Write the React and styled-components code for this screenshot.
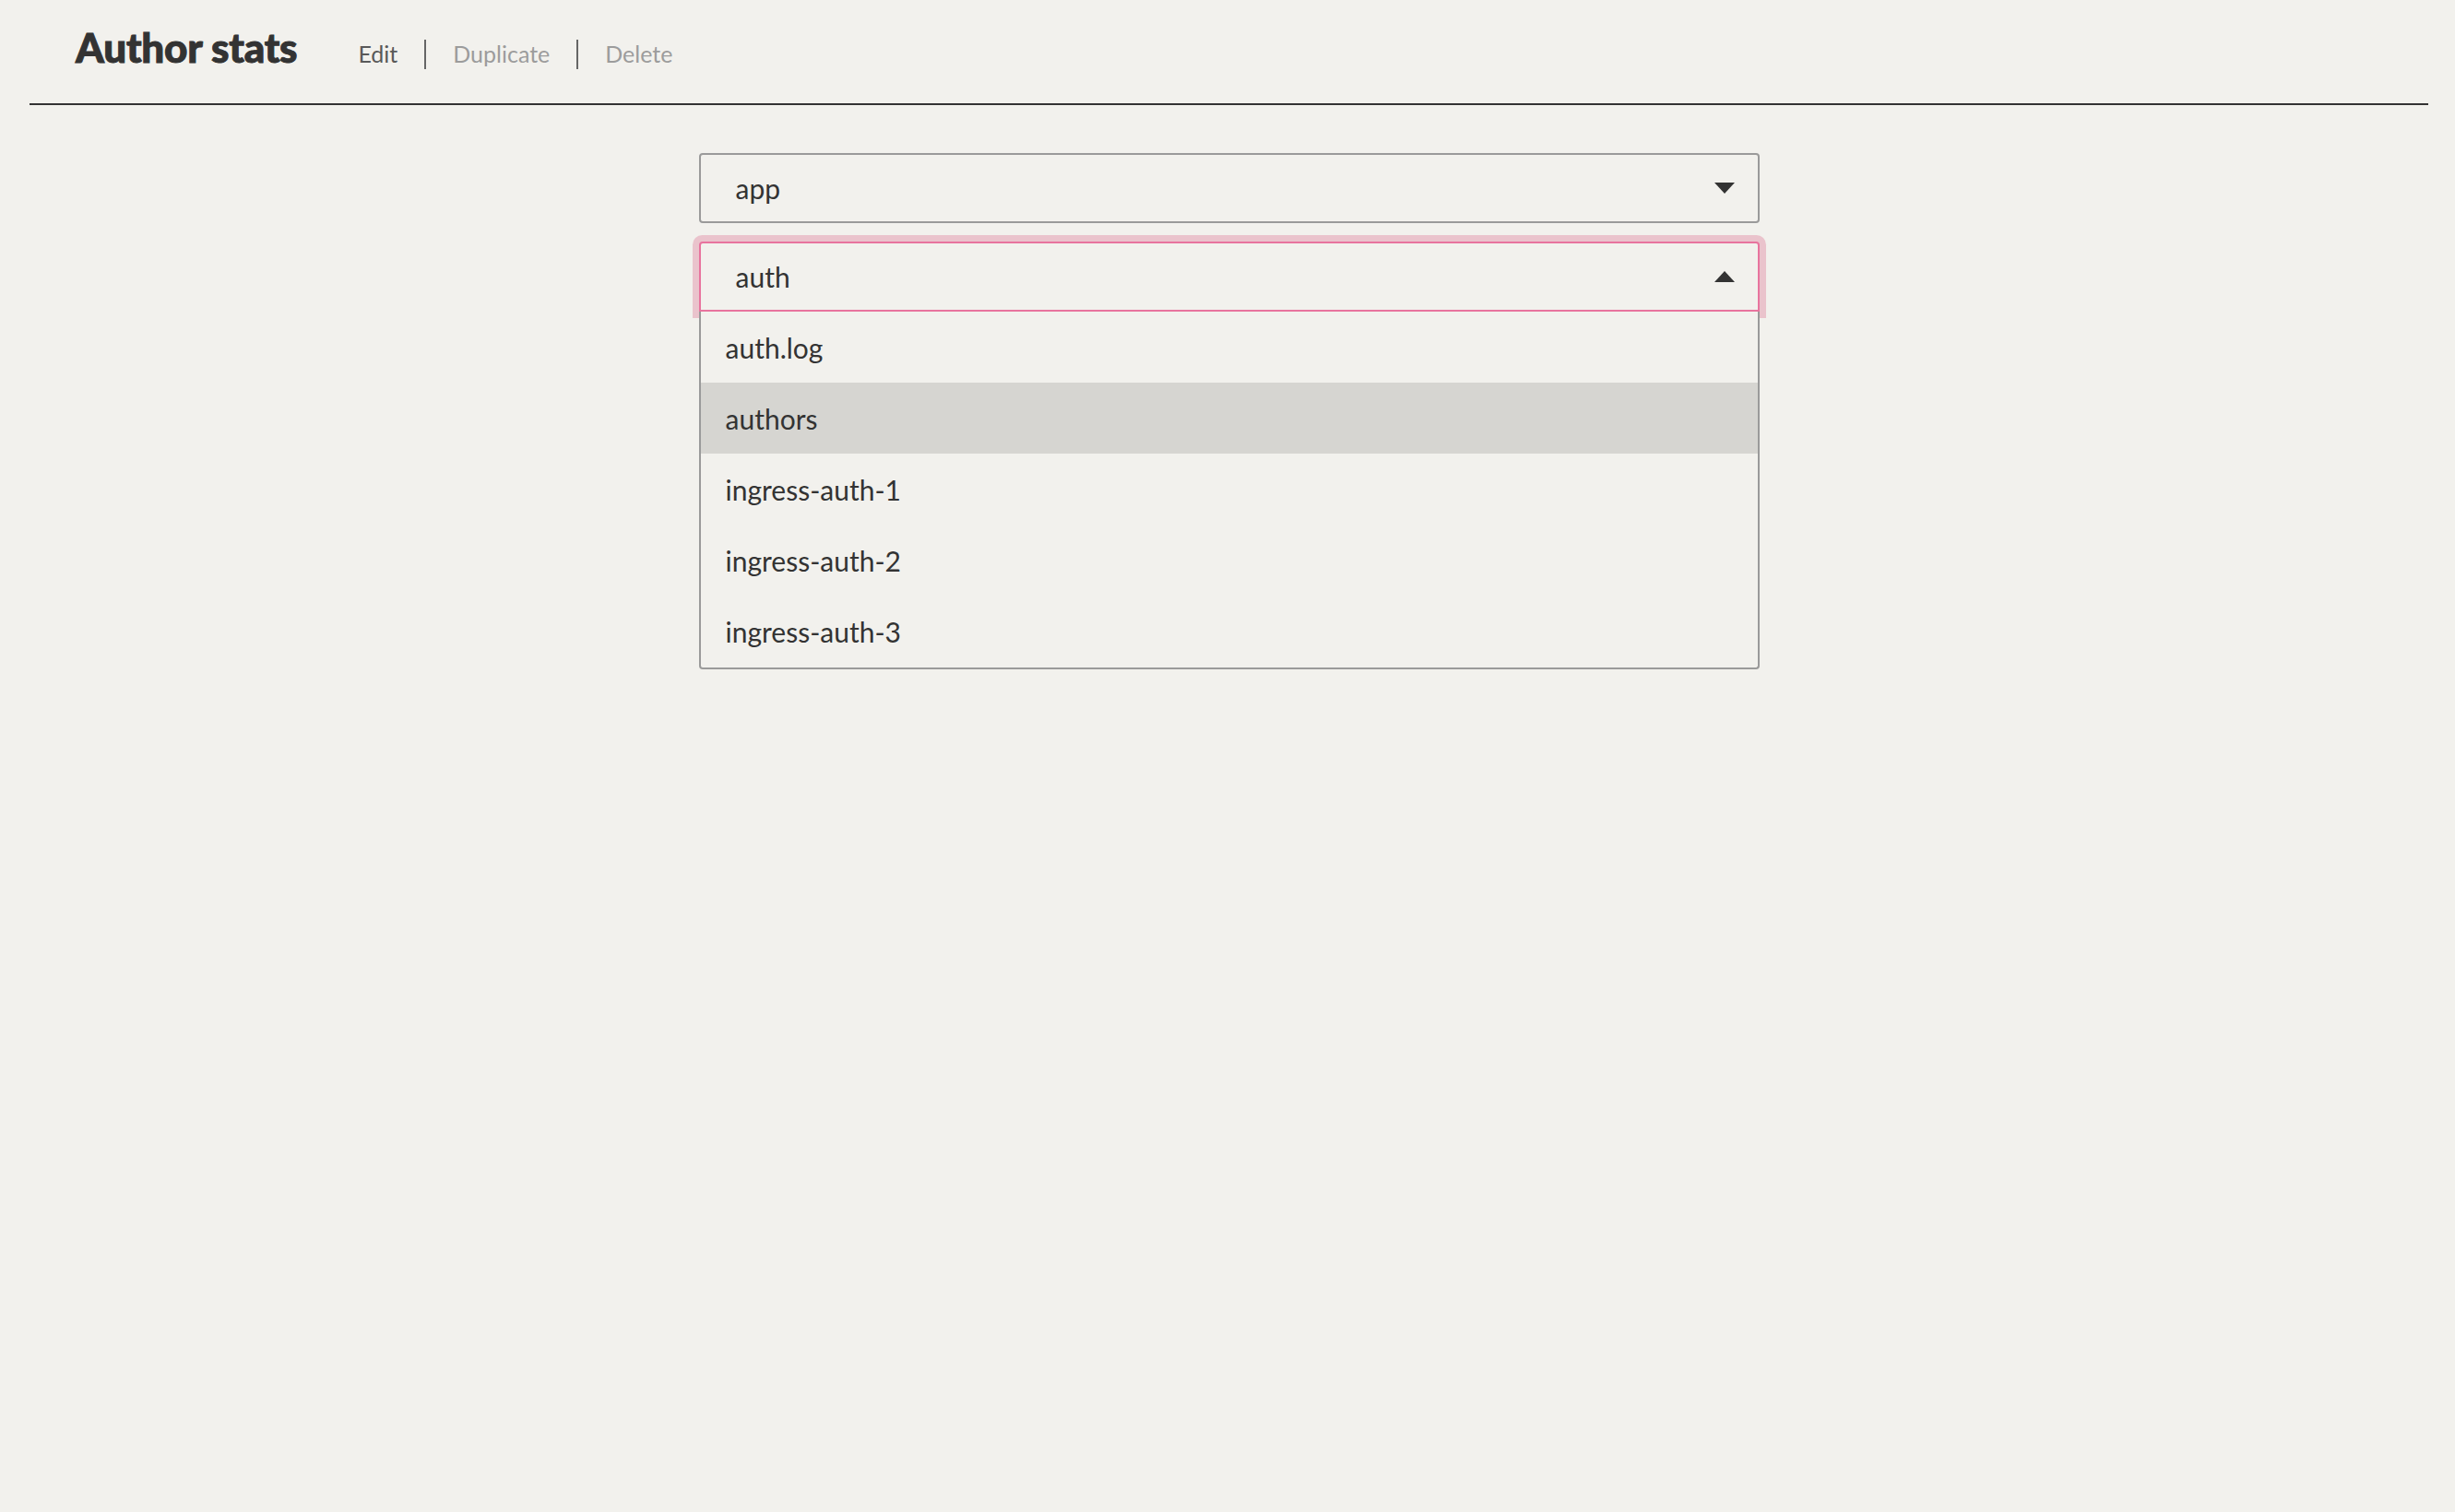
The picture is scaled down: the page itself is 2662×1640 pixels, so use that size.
import React, { useState } from 'react'
import styled, { createGlobalStyle } from "styled-components";

const GlobalStyle = createGlobalStyle`
  html, body {
    margin: 0;
    padding: 0;
    background: #f2f1ed;
  }
  body {
    font-family: Lato, "Open Sans", sans-serif;
    color: #333;
  }
`;

const Page = styled.div`
  min-height: 1640px;
  padding: 0 29px 0 32px;
  box-sizing: border-box;
`;

const Header = styled.div`
  display: flex;
  align-items: baseline;
  height: 114px;
  box-sizing: border-box;
  padding: 29px 50px 0;
  border-bottom: 2px solid #333;
`;

const Title = styled.h1`
  margin: 0 66px 0 0;
  font-size: 44px;
  line-height: 1;
  font-weight: 900;
  color: #333;
  -webkit-text-stroke: 1px #333;
  letter-spacing: -0.2px;
`;

const Actions = styled.div`
  display: flex;
  align-items: center;
`;

const ActionLink = styled.span`
  font-size: 25px;
  line-height: 1;
  color: ${p => (p.$active ? "#595959" : "#9c9c9c")};
  cursor: pointer;
`;

const Divider = styled.span`
  width: 2px;
  height: 32px;
  background: #666;
  margin: 0 29px;
`;

const Main = styled.div`
  width: 1150px;
  margin: 0 auto;
  padding-top: 52px;
  display: flex;
  flex-direction: column;
  gap: 20px;
`;

const SelectWrap = styled.div`
  position: relative;
`;

const Control = styled.div`
  display: flex;
  align-items: center;
  justify-content: space-between;
  height: 76px;
  box-sizing: border-box;
  padding: 0 25px 0 38px;
  font-size: 30px;
  color: #333;
  background: #f2f1ed;
  border: 2px solid ${p => (p.$open ? "#e8749e" : "#9a9a9a")};
  border-radius: ${p => (p.$open ? "4px 4px 0 0" : "4px")};
  box-shadow: ${p => (p.$open ? "0 0 0 7px #eac3cc" : "none")};
  cursor: pointer;
`;

const Menu = styled.ul`
  position: absolute;
  top: 100%;
  left: 0;
  right: 0;
  z-index: 2;
  margin: 0;
  padding: 0;
  list-style: none;
  background: #f2f1ed;
  border: 2px solid #9a9a9a;
  border-top: none;
  border-radius: 0 0 4px 4px;
`;

const Option = styled.li`
  display: flex;
  align-items: center;
  height: 77.2px;
  padding: 0 27px;
  font-size: 30px;
  color: #333;
  background: ${p => (p.$highlighted ? "#d6d5d1" : "transparent")};
  cursor: pointer;
`;

const Caret = ({ up }) => (
  <svg width="22" height="12" viewBox="0 0 22 12">
    {up ? <path d="M0 12 L11 0 L22 12 Z" fill="#333" /> : <path d="M0 0 L22 0 L11 12 Z" fill="#333" />}
  </svg>
);

const options = ["auth.log", "authors", "ingress-auth-1", "ingress-auth-2", "ingress-auth-3"];

const App = () => {
  const [hovered, setHovered] = useState(1);

  return (
    <>
      <GlobalStyle />
      <Page>
        <Header>
          <Title>Author stats</Title>
          <Actions>
            <ActionLink $active>Edit</ActionLink>
            <Divider />
            <ActionLink>Duplicate</ActionLink>
            <Divider />
            <ActionLink>Delete</ActionLink>
          </Actions>
        </Header>
        <Main>
          <SelectWrap>
            <Control>
              app
              <Caret />
            </Control>
          </SelectWrap>
          <SelectWrap>
            <Control $open>
              auth
              <Caret up />
            </Control>
            <Menu>
              {options.map((opt, i) => (
                <Option key={opt} $highlighted={i === hovered} onMouseEnter={() => setHovered(i)}>
                  {opt}
                </Option>
              ))}
            </Menu>
          </SelectWrap>
        </Main>
      </Page>
    </>
  )
}

export default App;
